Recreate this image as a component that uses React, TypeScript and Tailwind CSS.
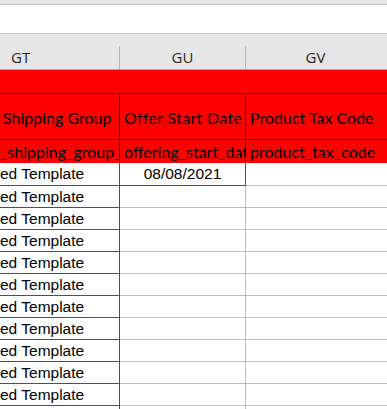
const headerFont = { fontFamily: '"Open Sans", "Noto Sans", sans-serif' };
const calibri = { fontFamily: 'Lato, "Open Sans", sans-serif' };
const arial = { fontFamily: '"Liberation Sans", Arial, sans-serif' };

function ColumnLabel({ label, className }: { label: string; className: string }) {
  return (
    <div className={`flex h-full items-center text-[15px] text-[#262626] ${className}`} style={headerFont}>
      {label}
    </div>
  );
}

function DataRow({ first, label, value }: { first: boolean; label?: string; value?: string }) {
  return (
    <div className="flex" style={arial}>
      <div
        className={`flex w-[120px] shrink-0 items-center overflow-hidden whitespace-nowrap border-r border-b border-[#137a13] text-[15.5px] text-black ${
          first ? "h-[23px]" : "h-[22px]"
        }`}
      >
        {label}
      </div>
      <div
        className={`flex w-[126px] shrink-0 items-center justify-center border-r border-b text-[15.5px] text-black ${
          first ? "h-[23px] border-[#137a13]" : "h-[22px] border-[#bfbfbf]"
        }`}
      >
        {value}
      </div>
      <div className={`flex-1 border-b border-[#bfbfbf] ${first ? "h-[23px]" : "h-[22px]"}`} />
    </div>
  );
}

export default function App() {
  const rows = Array.from({ length: 12 }, (_, i) => i);

  return (
    <div className="h-[409px] w-full overflow-hidden bg-white">
      {/* ribbon edge + formula bar */}
      <div className="h-[4px] bg-[#e6e6e6]" />
      <div className="h-[1px] bg-[#c6c6c6]" />
      <div className="h-[28px] bg-white" />
      <div className="h-[1px] bg-[#c6c6c6]" />

      {/* column headers */}
      <div className="h-[36px] border-b border-[#ababab] bg-[#e6e6e6] pt-[12px]">
        <div className="flex h-[23px]">
          <div className="flex w-[120px] shrink-0 items-end">
            <ColumnLabel label="GT" className="pl-[11px]" />
            <div className="ml-auto h-full w-[1px] bg-[#b4b4b4]" />
          </div>
          <div className="flex w-[126px] shrink-0">
            <ColumnLabel label="GU" className="flex-1 justify-center" />
            <div className="h-full w-[1px] bg-[#b4b4b4]" />
          </div>
          <ColumnLabel label="GV" className="flex-1 justify-center pr-[2px]" />
        </div>
      </div>

      {/* red header block */}
      <div className="bg-[#ff0000] text-black" style={calibri}>
        <div className="h-[24px] border-b border-black" />
        <div className="flex h-[46px] border-b border-black text-[16px]">
          <div className="flex w-[120px] shrink-0 items-center overflow-hidden whitespace-nowrap border-r border-black pl-[3px] pt-[3px]">
            Shipping Group
          </div>
          <div className="flex w-[126px] shrink-0 items-center overflow-hidden whitespace-nowrap border-r border-black pl-[4px] pt-[3px] tracking-[0.3px]">
            Offer Start Date
          </div>
          <div className="flex flex-1 items-center overflow-hidden whitespace-nowrap pl-[4px] pt-[3px]">
            Product Tax Code
          </div>
        </div>
        <div className="flex h-[23px] text-[16px]">
          <div className="flex w-[120px] shrink-0 items-center overflow-hidden whitespace-nowrap border-r border-black">
            _shipping_group_
          </div>
          <div className="flex w-[126px] shrink-0 items-center overflow-hidden whitespace-nowrap border-r border-black pl-[4px]">
            offering_start_date
          </div>
          <div className="flex flex-1 items-center overflow-hidden whitespace-nowrap pl-[4px]">
            product_tax_code
          </div>
        </div>
      </div>

      {/* data rows, the last one only peeks in below the fold */}
      {rows.map((i) => (
        <DataRow
          key={i}
          first={i === 0}
          label={i < 11 ? "ed Template" : undefined}
          value={i === 0 ? "08/08/2021" : undefined}
        />
      ))}
    </div>
  );
}
